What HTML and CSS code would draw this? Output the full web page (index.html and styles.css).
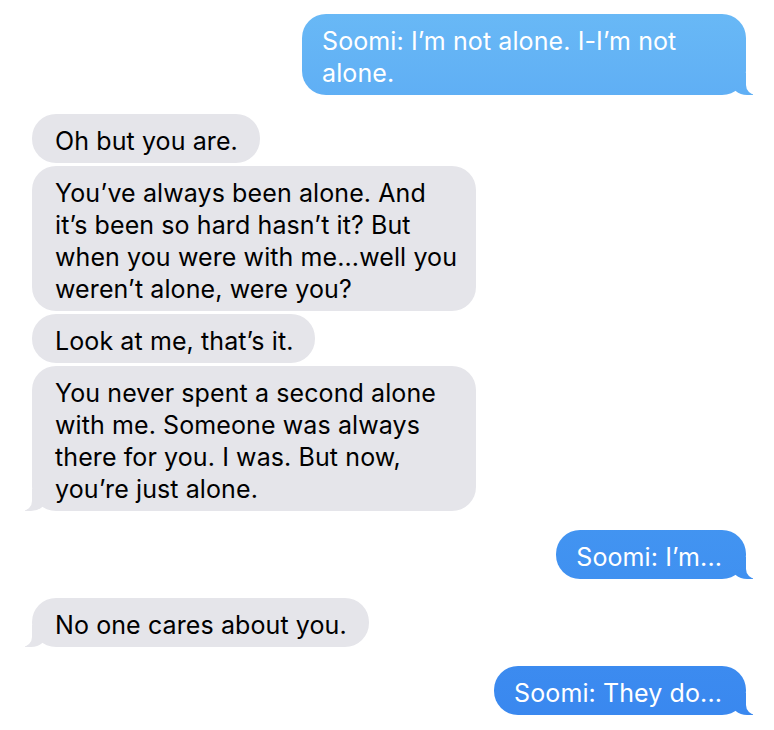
FILE: index.html
```html
<!DOCTYPE html>
<html lang="en">
<head>
<meta charset="utf-8">
<title>Messages</title>
<link rel="stylesheet" href="styles.css">
</head>
<body>
<main class="thread">
  <div class="bubble out tail wrapped">Soomi: I’m not alone. I-I’m not<br>alone.</div>

  <div class="group">
    <div class="bubble in">Oh but you are.</div>
    <div class="bubble in wrapped">You’ve always been alone. And<br>it’s been so hard hasn’t it? But<br>when you were with me...well you<br>weren’t alone, were you?</div>
    <div class="bubble in">Look at me, that’s it.</div>
    <div class="bubble in tail wrapped">You never spent a second alone<br>with me. Someone was always<br>there for you. I was. But now,<br>you’re just alone.</div>
  </div>

  <div class="bubble out tail">Soomi: I’m...</div>
  <div class="bubble in tail">No one cares about you.</div>
  <div class="bubble out tail">Soomi: They do...</div>
</main>
</body>
</html>
```
FILE: styles.css
```css
html, body {
  margin: 0;
  padding: 0;
  background: #ffffff;
}

body {
  font-family: Inter, "Noto Sans", "Liberation Sans", sans-serif;
  font-size: 25px;
  letter-spacing: 0.1px;
  line-height: 32px;
  color: #000000;
}

.thread {
  display: flex;
  flex-direction: column;
  gap: 19px;
  padding: 14px 28px 0 32px;
}

.group {
  display: flex;
  flex-direction: column;
  gap: 3px;
  align-items: flex-start;
}

.bubble {
  position: relative;
  padding: 11px 22px 6px 23px;
  border-radius: 24px;
  max-width: 444px;
  box-sizing: border-box;
  white-space: nowrap;
}

.bubble.wrapped {
  width: 444px;
}

.bubble.out {
  align-self: flex-end;
  padding-left: 20px;
  padding-right: 24px;
  color: #ffffff;
  background: linear-gradient(to bottom, #6abaf6 0%, #5aa9f4 20%, #4395f1 70%, #3987ef 100%) fixed;
}

.bubble.in {
  align-self: flex-start;
  background: #e5e5ea;
}

.bubble.tail::before,
.bubble.tail::after {
  content: "";
  position: absolute;
  bottom: 0;
  height: 22px;
}

.bubble.out.tail::before {
  right: -7px;
  width: 22px;
  background: inherit;
  border-bottom-left-radius: 16px 14px;
}

.bubble.out.tail::after {
  right: -26px;
  width: 26px;
  background: #ffffff;
  border-bottom-left-radius: 10px;
}

.bubble.in.tail::before {
  left: -7px;
  width: 22px;
  background: #e5e5ea;
  border-bottom-right-radius: 16px 14px;
}

.bubble.in.tail::after {
  left: -26px;
  width: 26px;
  background: #ffffff;
  border-bottom-right-radius: 10px;
}
```
